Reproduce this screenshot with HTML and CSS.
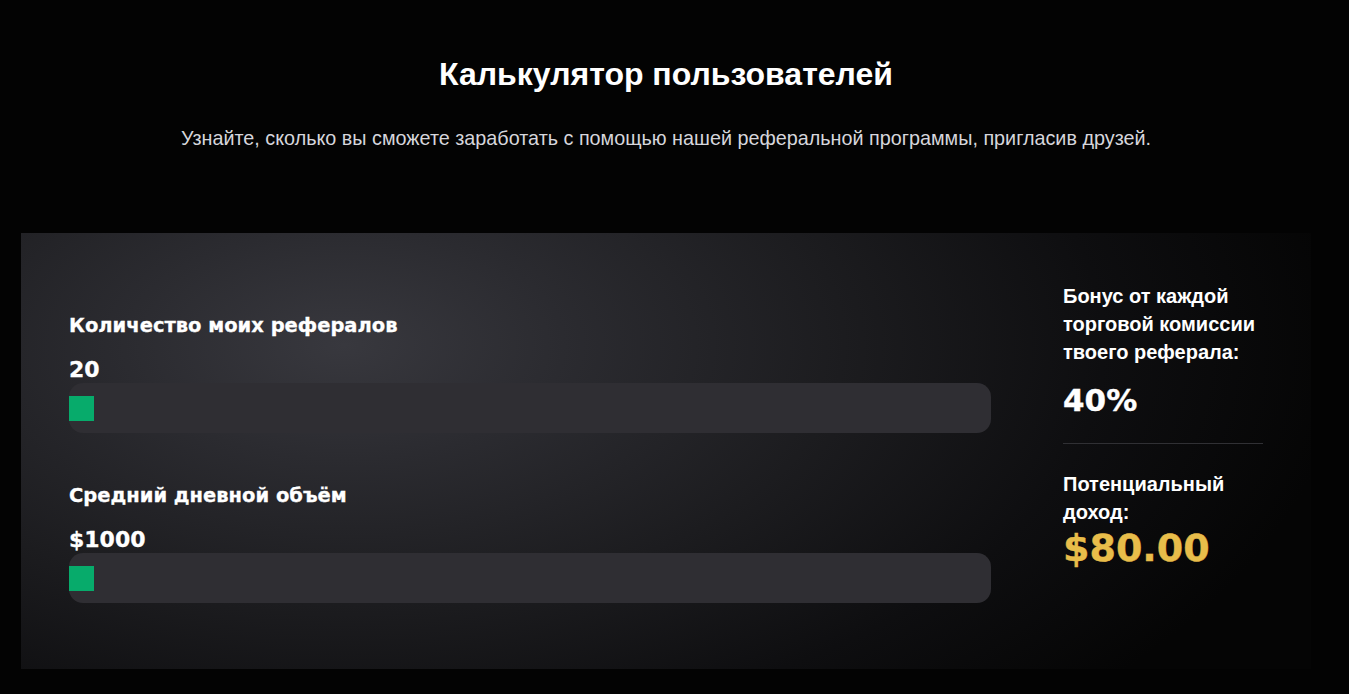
FILE: index.html
```html
<!DOCTYPE html>
<html lang="ru">
<head>
<meta charset="utf-8">
<title>Калькулятор пользователей</title>
<link rel="stylesheet" href="styles.css">
</head>
<body>
<main class="page">
  <header class="intro">
    <h1 class="title">Калькулятор пользователей</h1>
    <p class="subtitle">Узнайте, сколько вы сможете заработать с помощью нашей реферальной программы, пригласив друзей.</p>
  </header>
  <section class="card">
    <div class="inputs">
      <div class="field">
        <div class="label">Количество моих рефералов</div>
        <div class="value">20</div>
        <div class="track"><span class="thumb"></span></div>
      </div>
      <div class="field">
        <div class="label">Средний дневной объём</div>
        <div class="value">$1000</div>
        <div class="track"><span class="thumb"></span></div>
      </div>
    </div>
    <aside class="results">
      <div class="res-label">Бонус от каждой торговой комиссии твоего реферала:</div>
      <div class="percent">40%</div>
      <div class="divider"></div>
      <div class="res-label">Потенциальный доход:</div>
      <div class="income">$80.00</div>
    </aside>
  </section>
</main>
</body>
</html>
```
FILE: styles.css
```css
html, body {
  margin: 0;
  padding: 0;
  background: #030303;
}
body {
  font-family: "Liberation Sans", Arial, sans-serif;
  color: #fff;
  width: 1349px;
  height: 694px;
  overflow: hidden;
}
.page {
  width: 1332px;
  display: flex;
  flex-direction: column;
  align-items: center;
}
.intro {
  display: flex;
  flex-direction: column;
  align-items: center;
  padding-top: 55px;
}
.title {
  margin: 0;
  font-size: 32px;
  line-height: 38px;
  font-weight: 700;
}
.subtitle {
  margin: 33px 0 0;
  font-size: 19.8px;
  line-height: 24px;
  color: #d6d6dc;
}
.card {
  margin-top: 83px;
  width: 1290px;
  height: 436px;
  box-sizing: border-box;
  display: flex;
  padding: 49px 48px 0 48px;
  background:
    radial-gradient(ellipse 1000px 520px at 323px 112px, #38383e 0%, #2b2b30 22%, #1c1c1f 50%, #0e0e10 76%, #050505 100%);
}
.inputs {
  width: 922px;
  display: flex;
  flex-direction: column;
  gap: 52px;
  padding-top: 33px;
}
.field {
  display: flex;
  flex-direction: column;
}
.label {
  font-family: "DejaVu Sans", sans-serif;
  font-weight: 700;
  font-size: 19.5px;
  line-height: 22px;
  -webkit-text-stroke: 0.3px #fff;
}
.value {
  font-family: "DejaVu Sans", sans-serif;
  font-weight: 700;
  font-size: 22px;
  line-height: 26px;
  margin-top: 20px;
  -webkit-text-stroke: 0.3px #fff;
}
.track {
  height: 50px;
  border-radius: 14px;
  background: #2f2e33;
  display: flex;
  align-items: center;
}
.thumb {
  width: 25px;
  height: 25px;
  background: #07ab6b;
}
.results {
  margin-left: 72px;
  width: 200px;
  display: flex;
  flex-direction: column;
}
.res-label {
  font-size: 20px;
  line-height: 28px;
  font-weight: 700;
}
.percent {
  font-family: "DejaVu Sans", sans-serif;
  font-weight: 700;
  font-size: 31px;
  line-height: 40px;
  margin-top: 14px;
  -webkit-text-stroke: 0.4px #fff;
}
.divider {
  height: 1px;
  background: #303034;
  margin: 23px 0 26px;
}
.income {
  font-family: "DejaVu Sans", sans-serif;
  font-weight: 700;
  font-size: 38px;
  line-height: 44px;
  color: #e8bd4a;
  -webkit-text-stroke: 0.4px #e8bd4a;
}
```
